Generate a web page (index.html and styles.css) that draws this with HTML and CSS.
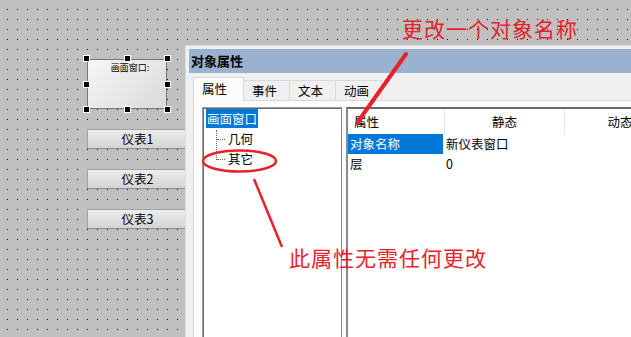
FILE: index.html
```html
<!DOCTYPE html>
<html lang="zh">
  <head>
    <meta charset="UTF-8" />
    <title>对象属性</title>
    <link rel="stylesheet" href="styles.css">
  </head>
  <body>
    <div class="canvas">
      <!-- widgets on the design canvas -->
      <div class="widget selected">
        <div class="widget-title">画面窗口:</div>
        <span class="handle h-tl"></span>
        <span class="handle h-tm"></span>
        <span class="handle h-tr"></span>
        <span class="handle h-ml"></span>
        <span class="handle h-mr"></span>
        <span class="handle h-bl"></span>
        <span class="handle h-bm"></span>
        <span class="handle h-br"></span>
      </div>
      <div class="btn-list">
        <div class="meter-btn">仪表1</div>
        <div class="meter-btn">仪表2</div>
        <div class="meter-btn">仪表3</div>
      </div>

      <!-- the property dialog -->
      <div class="dialog">
        <div class="dialog-title">对象属性</div>
        <div class="dialog-body">
          <div class="tabs">
            <div class="tab active">属性</div>
            <div class="tab">事件</div>
            <div class="tab">文本</div>
            <div class="tab">动画</div>
          </div>
          <div class="tab-page">
            <div class="tree">
              <div class="tree-root"><span class="sel">画面窗口</span></div>
              <div class="tree-children">
                <div class="tree-item">几何</div>
                <div class="tree-item">其它</div>
              </div>
            </div>
            <div class="grid">
              <div class="grid-row grid-head">
                <div class="cell c-name">属性</div>
                <div class="cell c-static">静态</div>
                <div class="cell c-dyn">动态</div>
              </div>
              <div class="grid-row">
                <div class="cell c-name sel">对象名称</div>
                <div class="cell c-val">新仪表窗口</div>
              </div>
              <div class="grid-row">
                <div class="cell c-name">层</div>
                <div class="cell c-val">0</div>
              </div>
            </div>
          </div>
        </div>
      </div>

      <!-- red annotations -->
      <svg class="marks" width="631" height="337" viewBox="0 0 631 337">
        <line x1="406" y1="54" x2="357" y2="123" stroke="#e8212b" stroke-width="4" stroke-linecap="round" />
        <ellipse cx="239.5" cy="161" rx="36.5" ry="10.5" fill="none" stroke="#e8212b" stroke-width="2.5" />
        <line x1="254" y1="179" x2="282" y2="247" stroke="#e8212b" stroke-width="2.5" />
      </svg>
      <div class="note note-top">更改一个对象名称</div>
      <div class="note note-bottom">此属性无需任何更改</div>
    </div>
  </body>
</html>
```

FILE: styles.css
```css
body {
  margin: 0;
  width: 631px;
  height: 337px;
  overflow: hidden;
  font-family: "Noto Sans CJK SC", "Liberation Sans", sans-serif;
  font-size: 12.5px;
  color: #000;
}

.canvas {
  position: relative;
  width: 631px;
  height: 337px;
  overflow: hidden;
  background-color: #c0c0c0;
  background-image:
    linear-gradient(to right, #c0c0c0 9px, transparent 9px),
    linear-gradient(to bottom, #c0c0c0 9px, #000 9px);
  background-size: 10px 10px;
  background-position: -2px 0;
}

/* selected window widget */
.widget {
  position: absolute;
  left: 87px;
  top: 59px;
  width: 78px;
  height: 48px;
  border: 1px solid #767676;
  background: linear-gradient(135deg, #f6f6f6, #dadada);
}

.widget-title {
  text-align: center;
  font-size: 9px;
  line-height: 12px;
  padding-top: 2px;
  padding-left: 6px;
}

.handle {
  position: absolute;
  width: 5px;
  height: 5px;
  background: #000;
  border: 1px solid #fff;
}

.h-tl { left: -5px; top: -5px; }
.h-tm { left: 36px; top: -5px; }
.h-tr { right: -5px; top: -5px; }
.h-ml { left: -5px; top: 21px; }
.h-mr { right: -5px; top: 21px; }
.h-bl { left: -5px; bottom: -5px; }
.h-bm { left: 36px; bottom: -5px; }
.h-br { right: -5px; bottom: -5px; }

.btn-list {
  position: absolute;
  left: 87px;
  top: 129px;
  display: flex;
  flex-direction: column;
  gap: 20px;
}

.meter-btn {
  width: 99px;
  height: 18px;
  line-height: 18px;
  text-align: center;
  font-size: 12.5px;
  background: linear-gradient(#ededed, #d4d4d4);
  border: 1px solid #a0a0a0;
  border-right-color: #7a7a7a;
  border-bottom-color: #8c8c8c;
}

/* dialog */
.dialog {
  position: absolute;
  left: 185px;
  top: 45px;
  width: 446px;
  height: 292px;
  box-sizing: border-box;
  background: #f0f0f0;
  border: 1px solid #dcdcdc;
  border-right: none;
  border-bottom: none;
  padding: 3px 0 0 3px;
  overflow: hidden;
}

.dialog-title {
  height: 24px;
  line-height: 24px;
  background: #99b2cf;
  font-weight: bold;
  font-size: 13px;
  padding-left: 2px;
}

.dialog-body {
  padding: 4px 0 0 4px;
}

.tabs {
  display: flex;
  align-items: flex-end;
  height: 23px;
}

.tab {
  width: 47px;
  height: 20px;
  line-height: 20px;
  padding-left: 8px;
  box-sizing: border-box;
  border: 1px solid #d9d9d9;
  border-bottom: none;
  background: #f0f0f0;
}

.tab.active {
  width: 51px;
  height: 24px;
  line-height: 22px;
  background: #fcfcfc;
  margin-bottom: -1px;
  position: relative;
}

.tab + .tab {
  margin-left: -1px;
}

.tab-page {
  display: flex;
  gap: 4px;
  background: #fcfcfc;
  border: 1px solid #d9d9d9;
  border-right: none;
  padding: 6px 0 0 8px;
  height: 240px;
}

.tree {
  flex: none;
  width: 140px;
  box-sizing: border-box;
  background: #fff;
  border-top: 1px solid #a0a0a0;
  border-left: 1px solid #a0a0a0;
  border-right: 1px solid #8a8a8a;
  box-shadow: inset 1px 1px 0 #696969;
  padding: 1px 0 0 3px;
}

.tree-root {
  height: 20px;
  line-height: 19px;
}

.sel {
  background: #0078d7;
  color: #fff;
}

.tree-root .sel {
  display: inline-block;
  padding: 0 1px;
}

.tree-children {
  margin-left: 10px;
  border-left: 1px dotted #666;
  height: 30px;
  margin-top: 1px;
}

.tree-item {
  position: relative;
  height: 20px;
  line-height: 18px;
  padding-left: 11px;
}

.tree-item::before {
  content: "";
  position: absolute;
  left: 0;
  top: 9px;
  width: 8px;
  border-top: 1px dotted #666;
}

.grid {
  flex: 1;
  min-width: 300px;
  background: #fff;
  border-top: 2px solid #696969;
  border-left: 2px solid #8a8a8a;
}

.grid-row {
  display: flex;
  height: 20px;
  line-height: 20px;
}

.grid-head {
  height: 25px;
  line-height: 25px;
}

.cell {
  flex: none;
  box-sizing: border-box;
}

.c-name {
  width: 95px;
  padding-left: 2px;
}

.grid-head .c-name {
  width: 97px;
  padding-left: 6px;
  border-right: 1px solid #e5e5e5;
}

.c-static {
  width: 120px;
  text-align: center;
  border-right: 1px solid #e5e5e5;
}

.c-dyn {
  width: 110px;
  text-align: center;
}

.c-val {
  padding-left: 3px;
}

/* annotations */
.marks {
  position: absolute;
  left: 0;
  top: 0;
}

.note {
  position: absolute;
  color: #e8212b;
  font-size: 21px;
  line-height: 24px;
  letter-spacing: 1px;
}

.note-top {
  left: 402px;
  top: 16px;
}

.note-bottom {
  left: 289px;
  top: 245px;
}
```
